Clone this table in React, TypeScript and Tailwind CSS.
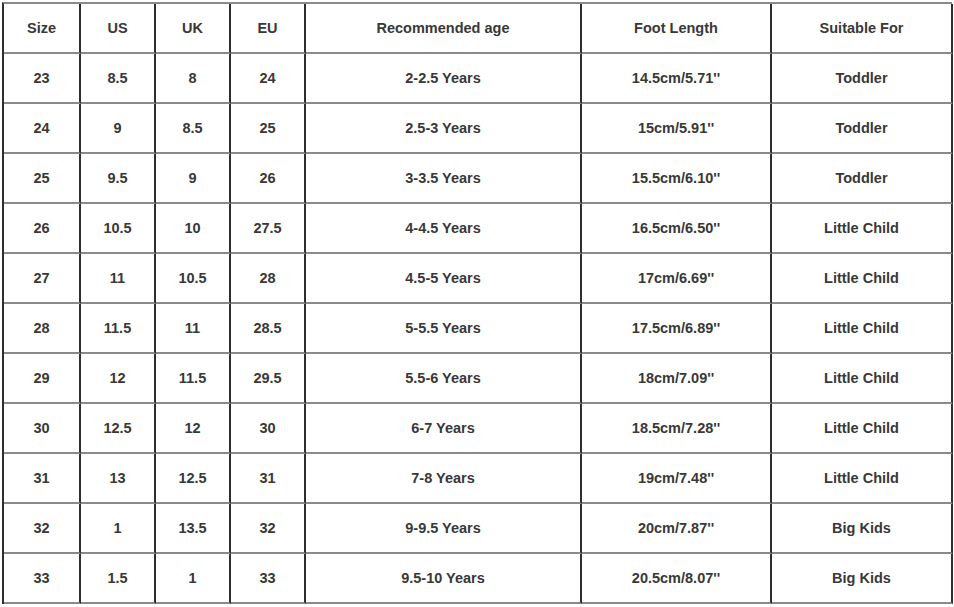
const headers = ["Size", "US", "UK", "EU", "Recommended age", "Foot Length", "Suitable For"];

const rows: string[][] = [
  ["23", "8.5", "8", "24", "2-2.5 Years", "14.5cm/5.71''", "Toddler"],
  ["24", "9", "8.5", "25", "2.5-3 Years", "15cm/5.91''", "Toddler"],
  ["25", "9.5", "9", "26", "3-3.5 Years", "15.5cm/6.10''", "Toddler"],
  ["26", "10.5", "10", "27.5", "4-4.5 Years", "16.5cm/6.50''", "Little Child"],
  ["27", "11", "10.5", "28", "4.5-5 Years", "17cm/6.69''", "Little Child"],
  ["28", "11.5", "11", "28.5", "5-5.5 Years", "17.5cm/6.89''", "Little Child"],
  ["29", "12", "11.5", "29.5", "5.5-6 Years", "18cm/7.09''", "Little Child"],
  ["30", "12.5", "12", "30", "6-7 Years", "18.5cm/7.28''", "Little Child"],
  ["31", "13", "12.5", "31", "7-8 Years", "19cm/7.48''", "Little Child"],
  ["32", "1", "13.5", "32", "9-9.5 Years", "20cm/7.87''", "Big Kids"],
  ["33", "1.5", "1", "33", "9.5-10 Years", "20.5cm/8.07''", "Big Kids"],
];

function Cell({ text }: { text: string }) {
  return (
    <div className="flex h-[50px] items-center justify-center border-r-2 border-b-2 border-r-[#2e2e2e] border-b-[#8a8a8a] pt-[2px] text-[14.5px] font-bold text-[#383838]">
      {text}
    </div>
  );
}

export default function App() {
  return (
    <div className="h-[607px] w-[954px] bg-white pl-[2px] pt-[2px] font-['Liberation_Sans',Arial,sans-serif]">
      <div className="grid w-[950px] grid-cols-[77px_75px_75px_75px_276px_190px_181px] border-t-2 border-l-2 border-t-[#8a8a8a] border-l-[#2e2e2e]">
        {headers.map((h) => (
          <Cell key={h} text={h} />
        ))}
        {rows.map((r) => r.map((c, i) => <Cell key={r[0] + "-" + i} text={c} />))}
      </div>
    </div>
  );
}
